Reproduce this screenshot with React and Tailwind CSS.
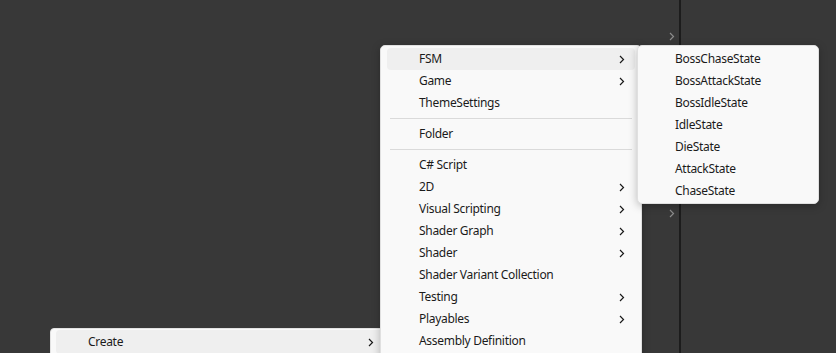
import React from 'react'

const font = { fontFamily: '"Noto Sans", "Noto Sans CJK KR", sans-serif' }

function Chevron({ className = 'text-[#1a1a1a]' }) {
  return (
    <svg width="6" height="9" viewBox="0 0 6 9" className={className}>
      <path d="M1 1 L4.5 4.5 L1 8" fill="none" stroke="currentColor" strokeWidth="1.2" />
    </svg>
  )
}

function Item({ label, sub, active }) {
  return (
    <div
      className={`flex items-center h-[22px] mx-[6px] rounded-[4px] pl-[32px] pr-[10px] ${
        active ? 'bg-[#efefef]' : ''
      }`}
    >
      <span className="flex-1 text-[12px] tracking-[-0.3px] text-[#1b1b1b] leading-none">{label}</span>
      {sub && <Chevron />}
    </div>
  )
}

function Sep() {
  return <div className="h-[9px] flex items-center px-[9px]"><div className="h-px w-full bg-[#dadada]" /></div>
}

const mainItems = [
  ['FSM', true, true],
  ['Game', true],
  ['ThemeSettings'],
  '-',
  ['Folder'],
  '-',
  ['C# Script'],
  ['2D', true],
  ['Visual Scripting', true],
  ['Shader Graph', true],
  ['Shader', true],
  ['Shader Variant Collection'],
  ['Testing', true],
  ['Playables', true],
  ['Assembly Definition'],
]

const states = ['BossChaseState', 'BossAttackState', 'BossIdleState', 'IdleState', 'DieState', 'AttackState', 'ChaseState']

export default function App() {
  return (
    <div className="relative w-[836px] h-[353px] bg-[#383838] overflow-hidden" style={font}>
      {/* background panel divider + arrows */}
      <div className="absolute left-[679px] top-0 w-[2px] h-full bg-[#1c1c1c]" />
      <div className="absolute left-[669px] top-[32px]"><Chevron className="text-[#8c8c8c]" /></div>
      <div className="absolute left-[669px] top-[209px]"><Chevron className="text-[#8c8c8c]" /></div>

      {/* Create menu */}
      <div className="absolute left-[50px] top-[328px] w-[340px] h-[40px] bg-[#f9f9f9] rounded-[4px] border border-[#e2e2e2] pt-[1px]">
        <div className="flex items-center h-[24px] mx-[5px] rounded-[4px] bg-[#efefef] pl-[32px] pr-[10px]">
          <span className="flex-1 text-[12px] tracking-[-0.3px] text-[#1b1b1b] leading-none">Create</span>
          <Chevron />
        </div>
      </div>

      {/* Create submenu */}
      <div className="absolute left-[380px] top-[45px] w-[262px] h-[330px] bg-[#f9f9f9] rounded-[5px] border border-[#e0e0e0] pt-[2px] shadow-[0_2px_8px_rgba(0,0,0,0.25)]">
        {mainItems.map((it, i) =>
          it === '-' ? <Sep key={i} /> : <Item key={i} label={it[0]} sub={it[1]} active={it[2]} />
        )}
      </div>

      {/* FSM submenu */}
      <div className="absolute left-[637px] top-[45px] w-[182px] h-[159px] bg-[#f9f9f9] rounded-[5px] border border-[#e0e0e0] pt-[2px] shadow-[0_2px_8px_rgba(0,0,0,0.25)]">
        {states.map((s) => (
          <div key={s} className="flex items-center h-[22px] pl-[37px]">
            <span className="text-[12px] tracking-[-0.3px] text-[#1b1b1b] leading-none">{s}</span>
          </div>
        ))}
      </div>
    </div>
  )
}
